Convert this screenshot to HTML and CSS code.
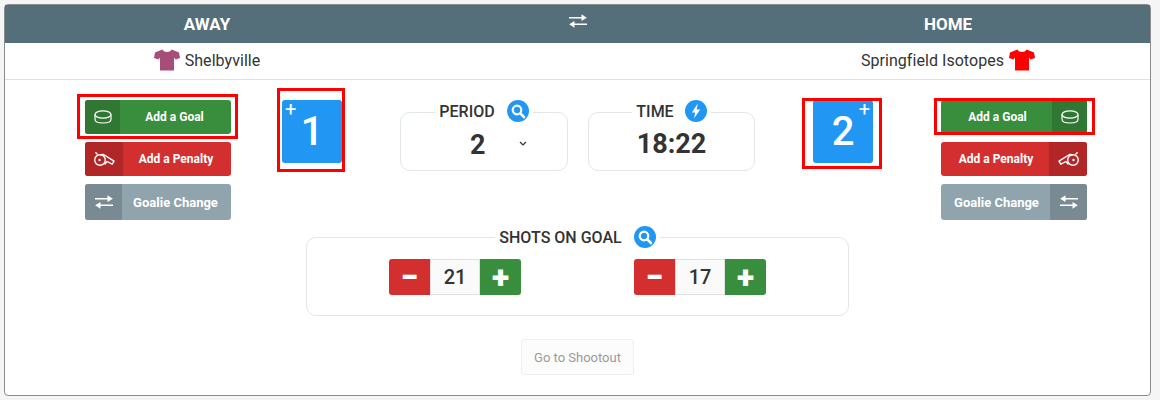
FILE: index.html
```html
<!DOCTYPE html>
<html lang="en">
<head>
    <meta charset="UTF-8">
    <title>Game Scoresheet</title>
    <link rel="stylesheet" href="styles.css">
</head>
<body>
    <svg class="sprites" width="0" height="0" aria-hidden="true">
        <symbol id="puck" viewBox="0 0 18 14">
            <ellipse cx="9" cy="4.500" rx="8" ry="3.700" fill="none" stroke="currentColor" stroke-width="1.200"/>
            <path d="M1 4.500v4.700C1 11.500 4.600 13 9 13s8-1.500 8-3.800V4.500" fill="none" stroke="currentColor" stroke-width="1.200"/>
        </symbol>
        <symbol id="whistle" viewBox="0 0 21 15">
            <circle cx="6" cy="8" r="5.300" fill="none" stroke="currentColor" stroke-width="1.400"/>
            <circle cx="5.500" cy="8" r="1.200" fill="currentColor"/>
            <path d="M1.800 .8l1.300 1.300M6.500 2.700l3-.2 10.500 6.700-1.800 3-5.200-2.700-2 2.500" fill="none" stroke="currentColor" stroke-width="1.400" stroke-linejoin="round" stroke-linecap="round"/>
        </symbol>
        <symbol id="swap" viewBox="0 0 18 14">
            <path d="M0 3.700h14M4 10.300h14" fill="none" stroke="currentColor" stroke-width="1.600"/>
            <path d="M12.500 0.300L17.800 3.700 12.500 7.100zM5.500 6.900L0.200 10.300 5.500 13.700z" fill="currentColor"/>
        </symbol>
        <symbol id="shirt" viewBox="0 0 26 22">
            <path d="M8.500 0.500L1 3.500 0 9l4.500 1.500L6 8.500V21.500h14V8.500l1.500 2L26 9l-1-5.500-7.500-3c-1 1.800-2.500 2.500-4.500 2.500s-3.500-.7-4.500-2.500z" fill="currentColor"/>
        </symbol>
        <symbol id="search" viewBox="0 0 22 22">
            <circle cx="11" cy="11" r="11" fill="#2196f3"/>
            <circle cx="10" cy="10" r="4.300" fill="none" stroke="#fff" stroke-width="2.200"/>
            <path d="M13.300 13.300l3.700 3.700" stroke="#fff" stroke-width="2.600" stroke-linecap="round"/>
        </symbol>
        <symbol id="bolt" viewBox="0 0 22 22">
            <circle cx="11" cy="11" r="11" fill="#2196f3"/>
            <path d="M12.800 3.500L6.800 12.500h3.400L9 18.500l6.200-9h-3.600z" fill="#fff"/>
        </symbol>
    </svg>

    <div class="card">
        <div class="sides head">
            <div>AWAY</div>
            <div class="head-swap"><svg class="swap-top"><use href="#swap"/></svg></div>
            <div>HOME</div>
        </div>
        <div class="sides teams">
            <div class="team"><svg class="shirt shirt-away"><use href="#shirt"/></svg>Shelbyville</div>
            <div></div>
            <div class="team">Springfield Isotopes<svg class="shirt shirt-home"><use href="#shirt"/></svg></div>
        </div>

        <div class="board">
            <div class="actions">
                <div class="marked">
                    <button class="act green"><span class="ico ico-35"><svg class="puck"><use href="#puck"/></svg></span><span class="lbl">Add a Goal</span></button>
                    <span class="mark mark-goal-l"></span>
                </div>
                <button class="act red"><span class="ico ico-38"><svg class="whistle"><use href="#whistle"/></svg></span><span class="lbl">Add a Penalty</span></button>
                <button class="act grey tall"><span class="ico ico-37"><svg class="swap"><use href="#swap"/></svg></span><span class="lbl">Goalie Change</span></button>
            </div>

            <div class="marked score-l">
                <button class="score"><span class="plus plus-l">+</span>1</button>
                <span class="mark mark-score-l"></span>
            </div>

            <fieldset class="box period">
                <legend>PERIOD <svg class="badge"><use href="#search"/></svg></legend>
                <div class="period-val"><span>2</span>
                    <svg class="chev" viewBox="0 0 8 5"><path d="M1 1l3 3 3-3" fill="none" stroke="#333" stroke-width="1.200"/></svg>
                </div>
            </fieldset>

            <fieldset class="box time">
                <legend>TIME <svg class="badge"><use href="#bolt"/></svg></legend>
                <div class="time-val">18:22</div>
            </fieldset>

            <div class="marked score-r">
                <button class="score"><span class="plus plus-r">+</span>2</button>
                <span class="mark mark-score-r"></span>
            </div>

            <div class="actions actions-r">
                <div class="marked">
                    <button class="act green"><span class="lbl">Add a Goal</span><span class="ico ico-35"><svg class="puck"><use href="#puck"/></svg></span></button>
                    <span class="mark mark-goal-r"></span>
                </div>
                <button class="act red"><span class="lbl">Add a Penalty</span><span class="ico ico-38"><svg class="whistle flip"><use href="#whistle"/></svg></span></button>
                <button class="act grey tall"><span class="lbl">Goalie Change</span><span class="ico ico-37"><svg class="swap flip"><use href="#swap"/></svg></span></button>
            </div>
        </div>

        <fieldset class="box shots">
            <legend>SHOTS ON GOAL <svg class="badge"><use href="#search"/></svg></legend>
            <div class="steppers">
                <div class="stepper"><button class="step minus">−</button><span class="count">21</span><button class="step add">+</button></div>
                <div class="stepper"><button class="step minus">−</button><span class="count">17</span><button class="step add">+</button></div>
            </div>
        </fieldset>

        <div class="foot"><button class="shootout" disabled>Go to Shootout</button></div>
    </div>
</body>
</html>
```

FILE: styles.css
```css
body {
    margin: 0;
    height: 400px;
    padding: 4px 9px 4px 4px;
    box-sizing: border-box;
    background-color: #f5f5f5;
    font-family: Roboto, "Liberation Sans", sans-serif;
    color: #333;
    overflow: hidden;
}

button {
    font-family: inherit;
    border: none;
    padding: 0;
}

.sprites {
    position: absolute;
}

.card {
    height: 392px;
    box-sizing: border-box;
    background-color: #fff;
    border: 1px solid #8c8c8c;
    border-radius: 4px;
}

.sides {
    display: grid;
    grid-template-columns: 1fr 337px 1fr;
    align-items: center;
    text-align: center;
}

.head {
    height: 38px;
    background-color: #546e7a;
    color: #fff;
    font-size: 17px;
    font-weight: 700;
}

.head-swap {
    display: flex;
    justify-content: center;
    padding-bottom: 6px;
}

.swap-top {
    width: 18px;
    height: 14px;
}

.teams {
    height: 36px;
    border-bottom: 1px solid #e0e0e0;
    font-size: 16px;
    letter-spacing: 0.05px;
}

.team {
    display: flex;
    justify-content: center;
    align-items: center;
    gap: 5px;
    padding-bottom: 2px;
}

.shirt {
    width: 26px;
    height: 22px;
}

.shirt-away {
    color: #a64d79;
}

.shirt-home {
    color: #f00;
}

.board {
    display: flex;
    height: 146px;
    padding: 20px 63px 0 80px;
    box-sizing: border-box;
}

.actions {
    display: flex;
    flex-direction: column;
    gap: 8px;
    width: 146px;
}

.actions-r {
    margin-left: 68px;
}

.marked {
    position: relative;
}

.mark {
    position: absolute;
    border: 3px solid #f00;
    pointer-events: none;
}

.mark-goal-l {
    top: -6px;
    left: -8px;
    width: 155px;
    height: 39px;
}

.mark-goal-r {
    top: -2px;
    left: -7px;
    width: 155px;
    height: 31px;
}

.mark-score-l {
    top: -12px;
    left: -5px;
    width: 62px;
    height: 78px;
}

.mark-score-r {
    top: -2px;
    left: -11px;
    width: 74px;
    height: 65px;
}

.act {
    display: flex;
    width: 146px;
    height: 34px;
    border-radius: 3px;
    overflow: hidden;
    color: #fff;
    font-size: 12px;
    font-weight: 700;
}

.act.tall {
    height: 36px;
    font-size: 13px;
}

.ico {
    display: flex;
    justify-content: center;
    align-items: center;
    flex: none;
    height: 100%;
}

.ico-35 {
    width: 35px;
}

.ico-37 {
    width: 37px;
}

.ico-38 {
    width: 38px;
}

.lbl {
    flex: 1;
    align-self: center;
    text-align: center;
    padding-right: 2px;
}

.actions-r .lbl {
    padding: 0 0 0 2px;
}

.green {
    background-color: #388e3c;
}

.green .ico {
    background-color: #2f7733;
}

.red {
    background-color: #d32f2f;
}

.red .ico {
    background-color: #b12727;
}

.grey {
    background-color: #90a4ae;
}

.grey .ico {
    background-color: #798a92;
}

.puck {
    width: 18px;
    height: 14px;
}

.whistle {
    width: 21px;
    height: 15px;
}

.swap {
    width: 18px;
    height: 14px;
}

.flip {
    transform: scaleX(-1);
}

.score-l {
    margin-left: 51px;
}

.score-r {
    margin-left: 58px;
}

.score {
    position: relative;
    display: block;
    width: 60px;
    height: 63px;
    background-color: #2196f3;
    border-radius: 3px;
    color: #fff;
    font-size: 40px;
    font-weight: 500;
}

.plus {
    position: absolute;
    top: -1px;
    font-size: 20px;
    font-weight: 400;
    line-height: 20px;
}

.plus-l {
    left: 3px;
}

.plus-r {
    right: 3px;
}

.box {
    margin: 0;
    padding: 0;
    box-sizing: border-box;
    border: 1px solid #e0e6e9;
    border-radius: 10px;
    min-width: 0;
}

.box legend {
    display: flex;
    align-items: center;
    gap: 12px;
    margin: 0 auto;
    padding: 0 4px;
    font-size: 16px;
    font-weight: 500;
}

.period legend,
.time legend {
    padding-bottom: 2px;
}

.time legend {
    gap: 11px;
}

.badge {
    width: 22px;
    height: 22px;
}

.period {
    margin-left: 58px;
    width: 168px;
    height: 71px;
}

.time {
    margin-left: 20px;
    width: 167px;
    height: 71px;
}

.period-val {
    display: flex;
    align-items: center;
    padding: 5px 0 0 69px;
    font-size: 27px;
    font-weight: 700;
}

.chev {
    width: 8px;
    height: 5px;
    margin: 0 0 3px 33px;
}

.time-val {
    padding-top: 4px;
    text-align: center;
    font-size: 27px;
    font-weight: 700;
}

.shots {
    display: block;
    width: 543px;
    height: 90px;
    margin: 0 auto 0 301px;
}

.steppers {
    display: flex;
    gap: 113px;
    padding: 11px 0 0 82px;
}

.stepper {
    display: flex;
    height: 36px;
}

.step {
    width: 41px;
    color: #fff;
    font-size: 32px;
    font-weight: 900;
    line-height: 30px;
}

.minus {
    background-color: #d32f2f;
    border-radius: 3px 0 0 3px;
}

.add {
    background-color: #388e3c;
    border-radius: 0 3px 3px 0;
}

.count {
    width: 50px;
    box-sizing: border-box;
    border: 1px solid #e0e0e0;
    background-color: #fafafa;
    text-align: center;
    font-size: 20px;
    font-weight: 500;
    line-height: 34px;
}

.foot {
    display: flex;
    justify-content: center;
    padding: 23px 0 0 0;
}

.shootout {
    width: 113px;
    height: 36px;
    background-color: #fcfcfc;
    border: 1px solid #eee;
    border-radius: 3px;
    color: #9a9a9a;
    font-size: 13px;
}
```
